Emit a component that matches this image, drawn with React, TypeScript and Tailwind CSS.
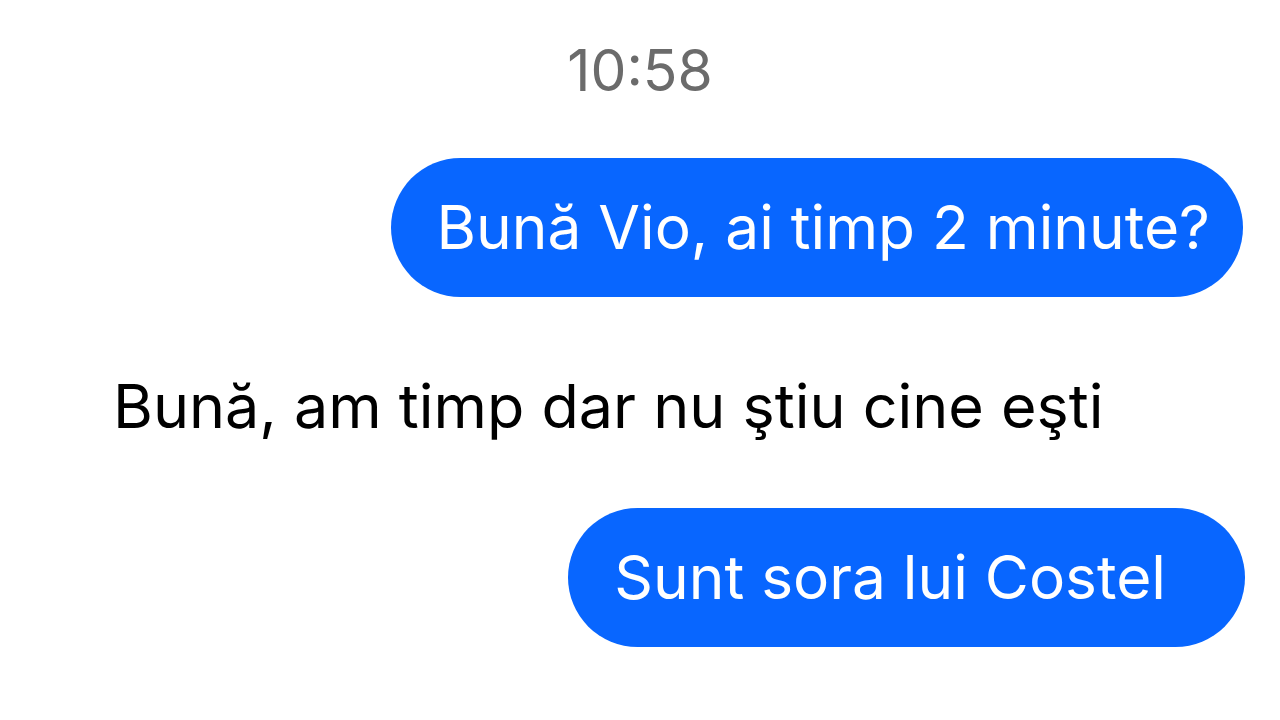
import React from "react";

const Bubble = ({ text, pr }: { text: string; pr: string }) => (
  <div className={`flex h-[139px] items-center rounded-full bg-[#0866ff] pl-[46px] text-white ${pr}`}>
    <span className="text-[60.4px] leading-none">{text}</span>
  </div>
);

export default function App() {
  return (
    <div
      className="flex h-[720px] w-[1280px] flex-col bg-white"
      style={{ fontFamily: "Inter, 'Noto Sans', sans-serif" }}
    >
      <div className="mt-[42px] flex justify-center">
        <span className="text-[57px] leading-none text-[#6b6b6b]">10:58</span>
      </div>

      <div className="mt-[59px] flex justify-end pr-[37px]">
        <Bubble text="Bună Vio, ai timp 2 minute?" pr="pr-[33px]" />
      </div>

      <div className="mt-[79px] pl-[113px]">
        <span className="text-[61px] leading-none text-black">
          Bună, am timp dar nu ştiu cine eşti
        </span>
      </div>

      <div className="mt-[71px] flex justify-end pr-[35px]">
        <Bubble text="Sunt sora lui Costel" pr="pr-[79px]" />
      </div>
    </div>
  );
}
